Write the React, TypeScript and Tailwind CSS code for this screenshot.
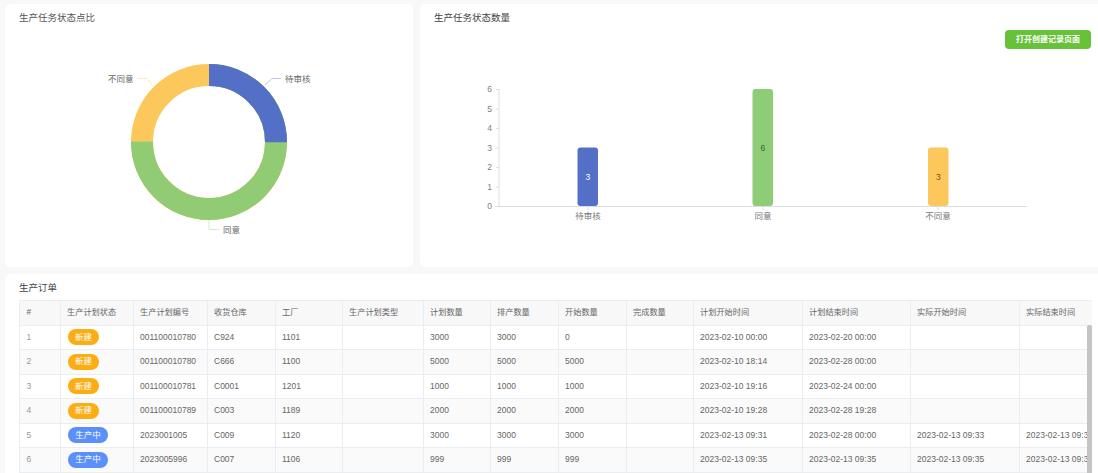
import React from 'react';

const FONT = "font-['Liberation_Sans','Noto_Sans_CJK_SC',sans-serif]";
const SVG_FONT = "'Liberation Sans','Noto Sans CJK SC',sans-serif";

const headers = [
  '#',
  '生产计划状态',
  '生产计划编号',
  '收货仓库',
  '工厂',
  '生产计划类型',
  '计划数量',
  '排产数量',
  '开始数量',
  '完成数量',
  '计划开始时间',
  '计划结束时间',
  '实际开始时间',
  '实际结束时间',
];

const rows = [
  ['新建', '001100010780', 'C924', '1101', '', '3000', '3000', '0', '', '2023-02-10 00:00', '2023-02-20 00:00', '', ''],
  ['新建', '001100010780', 'C666', '1100', '', '5000', '5000', '5000', '', '2023-02-10 18:14', '2023-02-28 00:00', '', ''],
  ['新建', '001100010781', 'C0001', '1201', '', '1000', '1000', '1000', '', '2023-02-10 19:16', '2023-02-24 00:00', '', ''],
  ['新建', '001100010789', 'C003', '1189', '', '2000', '2000', '2000', '', '2023-02-10 19:28', '2023-02-28 19:28', '', ''],
  ['生产中', '2023001005', 'C009', '1120', '', '3000', '3000', '3000', '', '2023-02-13 09:31', '2023-02-28 00:00', '2023-02-13 09:33', '2023-02-13 09:33'],
  ['生产中', '2023005996', 'C007', '1106', '', '999', '999', '999', '', '2023-02-13 09:35', '2023-02-13 09:35', '2023-02-13 09:35', '2023-02-13 09:35'],
];

const colWidths = [40, 73, 74, 68, 67, 81, 67, 68, 68, 67, 109, 108, 109, 73];

function StatusTag({ text }: { text: string }) {
  const color = text === '新建' ? 'bg-[#fdad14] w-[31px]' : 'bg-[#5b8ff9] w-[40px]';
  return (
    <span className={`inline-flex h-[16px] items-center justify-center rounded-full text-[8.5px] text-white ${color}`}>
      {text}
    </span>
  );
}

function DonutChart() {
  const cx = 204;
  const cy = 138;
  const r = 67;
  const c = 2 * Math.PI * r;
  const label = { fontSize: 8.5, fill: '#666', fontFamily: SVG_FONT };
  return (
    <svg width="408" height="263" className="block">
      <g fill="none" strokeWidth="22" transform={`rotate(-90 ${cx} ${cy})`}>
        <circle cx={cx} cy={cy} r={r} stroke="#fcc85c" strokeDasharray={`${c} ${c}`} />
        <circle cx={cx} cy={cy} r={r} stroke="#91cc75" strokeDasharray={`${c * 0.75} ${c}`} />
        <circle cx={cx} cy={cy} r={r} stroke="#5470c6" strokeDasharray={`${c * 0.25} ${c}`} />
      </g>
      <g fill="none" strokeWidth="1">
        <path d="M260 81 L267 74.500 L276 74.500" stroke="#bcc8ea" />
        <path d="M148 82 L142 74.500 L132 74.500" stroke="#fde9bd" />
        <path d="M204 216 L204 225.500 L214 225.500" stroke="#d2ecc6" />
      </g>
      <text x="280" y="78" {...label}>待审核</text>
      <text x="103" y="78" {...label}>不同意</text>
      <text x="218" y="229" {...label}>同意</text>
    </svg>
  );
}

function Bar({ x, top, fill, value, textFill }: { x: number; top: number; fill: string; value: number; textFill: string }) {
  const bottom = 202;
  return (
    <g>
      <path
        d={`M${x} ${bottom - 3} V${top + 3} Q${x} ${top} ${x + 3} ${top} H${x + 17.500} Q${x + 20.500} ${top} ${x + 20.500} ${top + 3} V${bottom - 3} Q${x + 20.500} ${bottom} ${x + 17.500} ${bottom} H${x + 3} Q${x} ${bottom} ${x} ${bottom - 3} Z`}
        fill={fill}
      />
      <text x={x + 10.250} y={(top + bottom) / 2 + 3} textAnchor="middle" fontSize="8.5" fill={textFill} fontFamily={SVG_FONT}>
        {value}
      </text>
    </g>
  );
}

function BarChart() {
  const ticks = [0, 1, 2, 3, 4, 5, 6];
  const y = (v: number) => 202 - v * 19.5;
  const cats = [
    { name: '待审核', x: 168 },
    { name: '同意', x: 343 },
    { name: '不同意', x: 518 },
  ];
  return (
    <svg width="678" height="263" className="block">
      <g stroke="#dcdee3" strokeWidth="1">
        <path d="M79 85 V202" fill="none" />
        <path d="M75 202.500 H607" fill="none" />
        {ticks.map((t) => (
          <path key={t} d={`M76 ${y(t) + 0.5} H79`} fill="none" />
        ))}
        {cats.map((c) => (
          <path key={c.name} d={`M${c.x} 202 V206`} fill="none" />
        ))}
      </g>
      {ticks.map((t) => (
        <text key={t} x="72" y={y(t) + 3} textAnchor="end" fontSize="8.5" fill="#808080" fontFamily={SVG_FONT}>
          {t}
        </text>
      ))}
      <Bar x={157.500} top={143.500} fill="#5470c6" value={3} textFill="#fff" />
      <Bar x={332.500} top={85} fill="#8fcc78" value={6} textFill="#3f5f35" />
      <Bar x={508} top={143.500} fill="#fcc85c" value={3} textFill="#6b5522" />
      {cats.map((c) => (
        <text key={c.name} x={c.x} y="215" textAnchor="middle" fontSize="8.5" fill="#777" fontFamily={SVG_FONT}>
          {c.name}
        </text>
      ))}
    </svg>
  );
}

function OrderTable() {
  return (
    <div className="relative mt-[6px] w-[1073px] overflow-hidden rounded-t-[2px] border-t border-l border-[#ebeef0]">
      <table className="w-[1072px] table-fixed border-collapse text-[8.5px] text-[#666]">
        <colgroup>
          {colWidths.map((w, i) => (
            <col key={i} style={{ width: w }} />
          ))}
        </colgroup>
        <thead>
          <tr className="h-[24px] bg-[#f8f8f9] text-[#666]">
            {headers.map((h) => (
              <th key={h} className="border-r border-b border-[#ebeef0] px-[6.5px] text-left text-[8.2px] font-normal whitespace-nowrap">
                {h}
              </th>
            ))}
          </tr>
        </thead>
        <tbody>
          {rows.map((row, i) => (
            <tr key={i} className={`h-[24.5px] ${i % 2 === 1 ? 'bg-[#fafafa]' : 'bg-white'}`}>
              <td className="border-r border-b border-[#ebeef0] px-[6.5px] text-[#999]">{i + 1}</td>
              <td className="border-r border-b border-[#ebeef0] px-[7.5px]">
                <StatusTag text={row[0]} />
              </td>
              {row.slice(1).map((cell, j) => (
                <td key={j} className="overflow-hidden border-r border-b border-[#ebeef0] px-[6.5px] whitespace-nowrap">
                  {cell}
                </td>
              ))}
            </tr>
          ))}
        </tbody>
      </table>
      <div className="absolute top-[24px] right-0 bottom-0 w-[5px] rounded-t-[2px] bg-[#c4c4c4]" />
    </div>
  );
}

export default function App() {
  return (
    <div className={`flex h-[473px] w-[1098px] flex-col gap-[7px] overflow-hidden bg-[#f8f8f8] pt-[4px] pl-[5px] ${FONT}`}>
      <div className="flex h-[263px] shrink-0 gap-[7px]">
        <div className="relative w-[408px] shrink-0 rounded-[5px] bg-white">
          <div className="absolute top-[8px] left-[14px] text-[9.500px] leading-[11px] text-[#555]">生产任务状态点比</div>
          <DonutChart />
        </div>
        <div className="relative flex-1 rounded-l-[5px] bg-white">
          <div className="absolute top-[8px] left-[14px] text-[9.500px] leading-[11px] text-[#444]">生产任务状态数量</div>
          <button className="absolute top-[26px] right-[7px] h-[19px] w-[86px] rounded-[4px] bg-[#67c23a] text-[8px] font-bold text-white">
            打开创建记录页面
          </button>
          <BarChart />
        </div>
      </div>
      <div className="flex-1 rounded-tl-[5px] bg-white pt-[8px] pl-[14px]">
        <div className="text-[9.500px] leading-[12px] text-[#444]">生产订单</div>
        <OrderTable />
      </div>
    </div>
  );
}
